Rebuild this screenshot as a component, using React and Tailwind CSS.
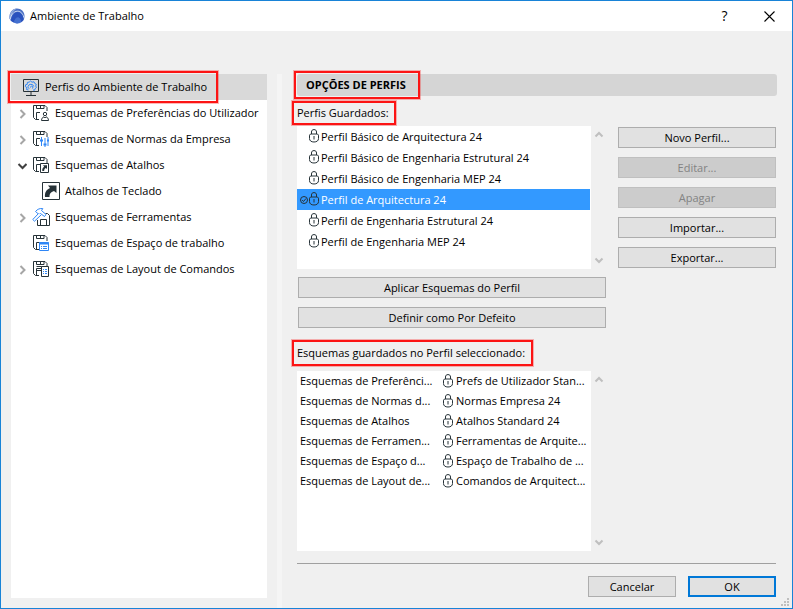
import { useState } from 'react'
import clsx from 'clsx'

const INK = '#263238'
const BLUE = '#2f86f6'

const treeItems = [
  { id: 'prefs', label: 'Esquemas de Preferências do Utilizador', icon: 'user', state: 'closed' },
  { id: 'company', label: 'Esquemas de Normas da Empresa', icon: 'sliders', state: 'closed' },
  { id: 'shortcuts', label: 'Esquemas de Atalhos', icon: 'shortcut', state: 'open' },
  { id: 'keyboard', label: 'Atalhos de Teclado', icon: 'keyboard', child: true },
  { id: 'tools', label: 'Esquemas de Ferramentas', icon: 'hammer', state: 'closed' },
  { id: 'workspace', label: 'Esquemas de Espaço de trabalho', icon: 'window' },
  { id: 'layout', label: 'Esquemas de Layout de Comandos', icon: 'menu', state: 'closed' },
]

const profiles = [
  'Perfil Básico de Arquitectura 24',
  'Perfil Básico de Engenharia Estrutural 24',
  'Perfil Básico de Engenharia MEP 24',
  'Perfil de Arquitectura 24',
  'Perfil de Engenharia Estrutural 24',
  'Perfil de Engenharia MEP 24',
]

const schemes = [
  ['Esquemas de Preferênci...', 'Prefs de Utilizador Stan...'],
  ['Esquemas de Normas d...', 'Normas Empresa 24'],
  ['Esquemas de Atalhos', 'Atalhos Standard 24'],
  ['Esquemas de Ferramen...', 'Ferramentas de Arquite...'],
  ['Esquemas de Espaço d...', 'Espaço de Trabalho de ...'],
  ['Esquemas de Layout de...', 'Comandos de Arquitect...'],
]

function AppLogo() {
  return (
    <svg width="16" height="16" viewBox="0 0 16 16" aria-hidden="true">
      <path d="M.5 10.500C0 5 3 .5 8 .5c4 0 7.500 3 7.500 7.500 0 2-.7 3.800-1.500 5L8 15.500 2 13Z" fill="#4a70c4" />
      <path d="M.5 10.500C.2 5 3.500.8 8 .6 4.500 2.500 2.200 6 1.500 11.500Z" fill="#8fa9dc" />
      <path d="M1.200 11.500C2 7 4.500 3.300 8.500 3.200c3.500 0 5.800 3 6.500 7.300" fill="none" stroke="#dbe5f7" strokeWidth="0.900" />
      <path d="M1.800 12.500C3 7.500 5.500 4 8.500 4c3.200 0 5.500 3 6.200 7-.4 1.200-1.200 2.300-2.400 3.200C11.500 11 10.500 9.500 9 9.500c-2.200 0-3.500 2-4 5.300-1.200-.5-2.300-1.300-3.200-2.300Z" fill="#2a52be" />
      <path d="M5 14.800c.5-3.300 1.800-5.300 4-5.300 1.500 0 2.500 1.500 3.300 4.700A7.500 7.500 0 0 1 5 14.800Z" fill="#4470d0" />
    </svg>
  )
}

function MonitorIcon() {
  return (
    <svg width="16" height="17" viewBox="0 0 16 17" fill="none" aria-hidden="true">
      <path d="M.5.5h15v12H.5zM8 12.500V16M3 16.500h10" stroke={INK} />
      <path
        d="M5.500 11L3.500 10.500 4 8.700 2.300 7.500l.4-1.800 1.500-.3.2-2 1.800-.3L7.500 2l1.500 1.200 2-.4.8 1.700 1.500.8-.6 1.700.8 1.500-1.500 1.200-.3 1.500-1.700-.2"
        stroke={BLUE}
      />
      <path d="M10.800 7.500A3 3 0 0 0 5 7.500c0 1 .5 1.800 1.200 2.300" stroke={BLUE} />
      <path d="M7.500 8.500a1.200 1.200 0 1 1 1.500 1" stroke={BLUE} />
    </svg>
  )
}

function Floppy() {
  return (
    <>
      <path d="M6 14.500H2.500L.5 12.500V.5h11.500l2 2V6" stroke={INK} />
      <path d="M3.500.5v3h7.500v-3M7.500 1v2M3.500 14V7.500H8" stroke={INK} />
    </>
  )
}

function TreeIcon({ name }) {
  if (name === 'keyboard') {
    return (
      <svg width="18" height="18" viewBox="0 0 18 18" fill="none" aria-hidden="true">
        <path d="M.5.5h17v17H.5z" fill="#fff" stroke={INK} />
        <path d="M3 15C2.500 10.500 4.500 7.500 8 6L6 3.500H14.500V11L12 9C8.500 10 7.300 12 7.500 15Z" fill={INK} />
      </svg>
    )
  }
  if (name === 'hammer') {
    return (
      <svg width="18" height="18" viewBox="0 0 18 18" className="-mx-px" fill="none" aria-hidden="true">
        <path d="M5.500 12v5.500h12V7.500L15.500 5.500h-2M8.500 17v-5.500h6V17" stroke={INK} />
        <path d="M3.500 3.500C5.500 1 8 .2 10.800.6L9.500 2.500l4.500 4-1.500 2L8.500 5.500 7 6.500Z" fill="#fff" stroke={BLUE} />
        <path d="M6.500 5.500L.8 11.500l1.700 1.700L9 7" fill="#fff" stroke={BLUE} />
      </svg>
    )
  }
  return (
    <svg width="16" height="16" viewBox="0 0 16 16" fill="none" aria-hidden="true">
      <Floppy />
      {name === 'user' && (
        <g stroke={INK}>
          <path d="M7 6.500h9V16H7z" fill="#fff" stroke="none" />
          <circle cx="12" cy="9" r="1.700" />
          <path d="M8.500 15.500c0-2 1.300-3.500 2.500-3.700l1 1.200 1-1.200c1.200.2 2.500 1.700 2.500 3.700Z" />
        </g>
      )}
      {name === 'sliders' && (
        <g stroke={BLUE}>
          <path d="M7 6h9v10H7z" fill="#fff" stroke="none" />
          <path d="M8.500 6v9M12 7v9M15 6v9" />
          <path d="M7 9.500h3M10.500 13.500h3M14 9.500h2" strokeWidth="2" />
        </g>
      )}
      {name === 'shortcut' && (
        <g>
          <path d="M7.500 6.500h8v9h-8z" fill="#fff" stroke={INK} />
          <path d="M9.300 14c-.3-2 .4-3.600 1.900-4.300L10 8.300h4V12l-1.200-1c-1.200.5-1.700 1.500-1.600 3Z" fill={INK} />
        </g>
      )}
      {name === 'window' && (
        <g stroke={BLUE}>
          <path d="M6.500 7.500h9v8h-9z" fill="#fff" />
          <path d="M6 8.500h10" strokeWidth="2" />
          <path d="M8 11.500h1M10 11.500h4M8 13.500h1M10 13.500h4" />
        </g>
      )}
      {name === 'menu' && (
        <g>
          <path d="M3.500 5.500h8M3.500 9.500H8" stroke={INK} />
          <path d="M8.500 5.500h7v10h-7z" fill="#fff" stroke={INK} />
          <path d="M10 8.500h1M12 8.500h2M10 10.500h1M12 10.500h2M10 12.500h1M12 12.500h2" stroke={BLUE} />
        </g>
      )}
    </svg>
  )
}

function Lock() {
  return (
    <svg width="10" height="14" viewBox="0 0 10 14" className="shrink-0" fill="none" stroke={INK} aria-hidden="true">
      <path d="M2.500 5V3C2.500 1.400 3.400.6 5 .6S7.500 1.400 7.500 3v2" />
      <path d="M1.500 5h7l1 1.200v3.300c0 2.300-1.800 3.500-4.500 3.500S.5 11.800.5 9.500V6.200ZM5 7v3.500" />
    </svg>
  )
}

function Chevron({ direction, className }) {
  const paths = {
    right: 'M3.500 1l4 4-4 4',
    down: 'M1.500 3l4 4 4-4',
    up: 'M1.500 6.500L5 3l3.500 3.500',
    scroll: 'M1.500 3.500L5 7l3.500-3.500',
  }
  return (
    <svg width="10" height="10" viewBox="0 0 10 10" className={className} fill="none" stroke="currentColor" strokeWidth="2" aria-hidden="true">
      <path d={paths[direction]} />
    </svg>
  )
}

function Highlight({ className }) {
  return (
    <span
      className={clsx('pointer-events-none absolute z-10 border-2 border-[#fc1414] outline outline-[#fc1414]/30', className)}
    />
  )
}

function Button({ children, className, primary, ...props }) {
  return (
    <button
      type="button"
      className={clsx(
        'flex h-[21px] items-center justify-center disabled:border-[#bfbfbf] disabled:bg-[#cccccc] disabled:text-[#838383]',
        primary ? 'border-2 border-[#0078d7] bg-[#e1e1e1]' : 'border border-[#adadad] bg-[#e1e1e1]',
        className
      )}
      {...props}
    >
      {children}
    </button>
  )
}

function ScrollArrows() {
  return (
    <div className="flex w-[15px] flex-col items-center justify-between py-1 text-[#bfbfbf]">
      <button type="button" aria-label="Subir">
        <Chevron direction="up" />
      </button>
      <button type="button" aria-label="Descer">
        <Chevron direction="scroll" />
      </button>
    </div>
  )
}

function Sidebar() {
  return (
    <nav className="mb-[10px] w-64 shrink-0 bg-white">
      <button type="button" className="flex h-[26px] w-full items-center bg-[#d9d9d9] text-left">
        <span className="relative flex h-full items-center gap-[6px] pr-3 pl-3">
          <MonitorIcon />
          Perfis do Ambiente de Trabalho
          <Highlight className="-inset-y-[3px] -left-[3px] right-px" />
        </span>
      </button>
      <ul>
        {treeItems.map((item) => (
          <li key={item.id}>
            <button
              type="button"
              className={clsx('flex h-[26px] w-full items-center whitespace-nowrap text-left', item.child ? 'gap-[5px] pl-[31px]' : 'gap-[6px] pl-[6px]')}
            >
              {!item.child && (
                <span className="w-[10px] shrink-0 pt-[2px]">
                  {item.state === 'closed' && <Chevron direction="right" className="text-[#a6a6a6]" />}
                  {item.state === 'open' && <Chevron direction="down" className="text-[#404040]" />}
                </span>
              )}
              <TreeIcon name={item.icon} />
              {item.label}
            </button>
          </li>
        ))}
      </ul>
    </nav>
  )
}

export default function App() {
  const [selected, setSelected] = useState(3)

  return (
    <div className="flex min-h-screen flex-col border border-[#1883d7] bg-[#f0f0f0] font-['Open_Sans','Noto_Sans',sans-serif] text-[11px] leading-4 text-black">
      <header className="flex h-[30px] items-center bg-white pl-2">
        <AppLogo />
        <h1 className="ml-[5px] flex-1">Ambiente de Trabalho</h1>
        <button type="button" aria-label="Ajuda" className="w-[45px] text-sm font-medium">
          ?
        </button>
        <button type="button" aria-label="Fechar" className="flex w-[45px] justify-center">
          <svg width="11" height="11" viewBox="0 0 11 11" fill="none" stroke="#000" strokeWidth="1.100" aria-hidden="true">
            <path d="M.5.5l10 10M10.500.5l-10 10" />
          </svg>
        </button>
      </header>

      <main className="relative flex flex-1 pt-[43px] pl-[10px]">
        <Sidebar />
        <div className="ml-[10px] w-[5px] shrink-0 bg-[#f5f5f5]" />

        <section className="flex min-w-0 flex-1 flex-col px-[15px] pb-[11px]">
          <h2 className="flex h-[22px] items-center rounded-[3px] bg-[#d5d5d5] font-bold">
            <span className="relative flex h-full items-center pr-4 pl-[9px]">
              OPÇÕES DE PERFIS
              <Highlight className="-inset-y-[3px] -left-[3px] right-[2px]" />
            </span>
          </h2>

          <div className="grid grid-cols-[minmax(0,1fr)_158px] gap-x-3 pr-px">
            <div>
              <div className="flex h-[30px] items-center pt-1">
                <span id="profiles-label" className="relative pr-2">
                  Perfis Guardados:
                  <Highlight className="-inset-y-1 -left-[5px] right-px" />
                </span>
              </div>
              <div className="flex min-h-[143px]">
                <ul role="listbox" aria-labelledby="profiles-label" className="flex-1 bg-white pr-px">
                  {profiles.map((profile, i) => (
                    <li
                      key={profile}
                      role="option"
                      aria-selected={selected === i}
                      onClick={() => setSelected(i)}
                      className={clsx('flex h-[21px] items-center pl-[3px]', selected === i && 'bg-[#3399ff] text-white')}
                    >
                      <span className="w-[9px] shrink-0">
                        {selected === i && (
                          <svg width="8" height="8" viewBox="0 0 8 8" fill="none" stroke={INK} aria-hidden="true">
                            <circle cx="4" cy="4" r="3.500" />
                            <path d="M2.200 4l1.300 1.500L6 2.500" />
                          </svg>
                        )}
                      </span>
                      <span className="pb-[2px]">
                        <Lock />
                      </span>
                      <span className="ml-[2px]">{profile}</span>
                    </li>
                  ))}
                </ul>
                <ScrollArrows />
              </div>
            </div>
            <div className="flex flex-col gap-[9px] pt-[31px]">
              <Button>Novo Perfil...</Button>
              <Button disabled>Editar...</Button>
              <Button disabled>Apagar</Button>
              <Button>Importar...</Button>
              <Button>Exportar...</Button>
            </div>

            <div className="mt-2 flex flex-col gap-[9px] pl-px">
              <Button>Aplicar Esquemas do Perfil</Button>
              <Button>Definir como Por Defeito</Button>
            </div>

            <div className="col-start-1">
              <div className="flex h-[43px] items-center pt-[7px]">
                <span id="schemes-label" className="relative pr-2">
                  Esquemas guardados no Perfil seleccionado:
                  <Highlight className="-inset-y-[5px] -left-[5px] right-0" />
                </span>
              </div>
              <div className="flex min-h-[180px]">
                <div className="flex-1 bg-white">
                  <table aria-labelledby="schemes-label" className="w-full table-fixed whitespace-nowrap">
                    <tbody>
                      {schemes.map(([scheme, value]) => (
                        <tr key={scheme} className="h-5">
                          <td className="w-[146px] p-0 pl-[3px]">{scheme}</td>
                          <td className="p-0">
                            <span className="flex items-center gap-[3px]">
                              <Lock />
                              {value}
                            </span>
                          </td>
                        </tr>
                      ))}
                    </tbody>
                  </table>
                </div>
                <ScrollArrows />
              </div>
            </div>
          </div>

          <hr className="mt-3 mr-px border-[#a0a0a0]" />
          <div className="mt-3 mr-px flex justify-end gap-3">
            <Button className="w-[88px]">Cancelar</Button>
            <Button className="w-[88px]" primary>
              OK
            </Button>
          </div>
        </section>

        <svg width="8" height="8" viewBox="0 0 8 8" className="absolute right-[3px] bottom-[2px]" fill="#bfbfbf" aria-hidden="true">
          <path d="M0 6h2v2H0zM3 6h2v2H3zM6 6h2v2H6zM3 3h2v2H3zM6 3h2v2H6zM6 0h2v2H6z" />
        </svg>
      </main>
    </div>
  )
}
